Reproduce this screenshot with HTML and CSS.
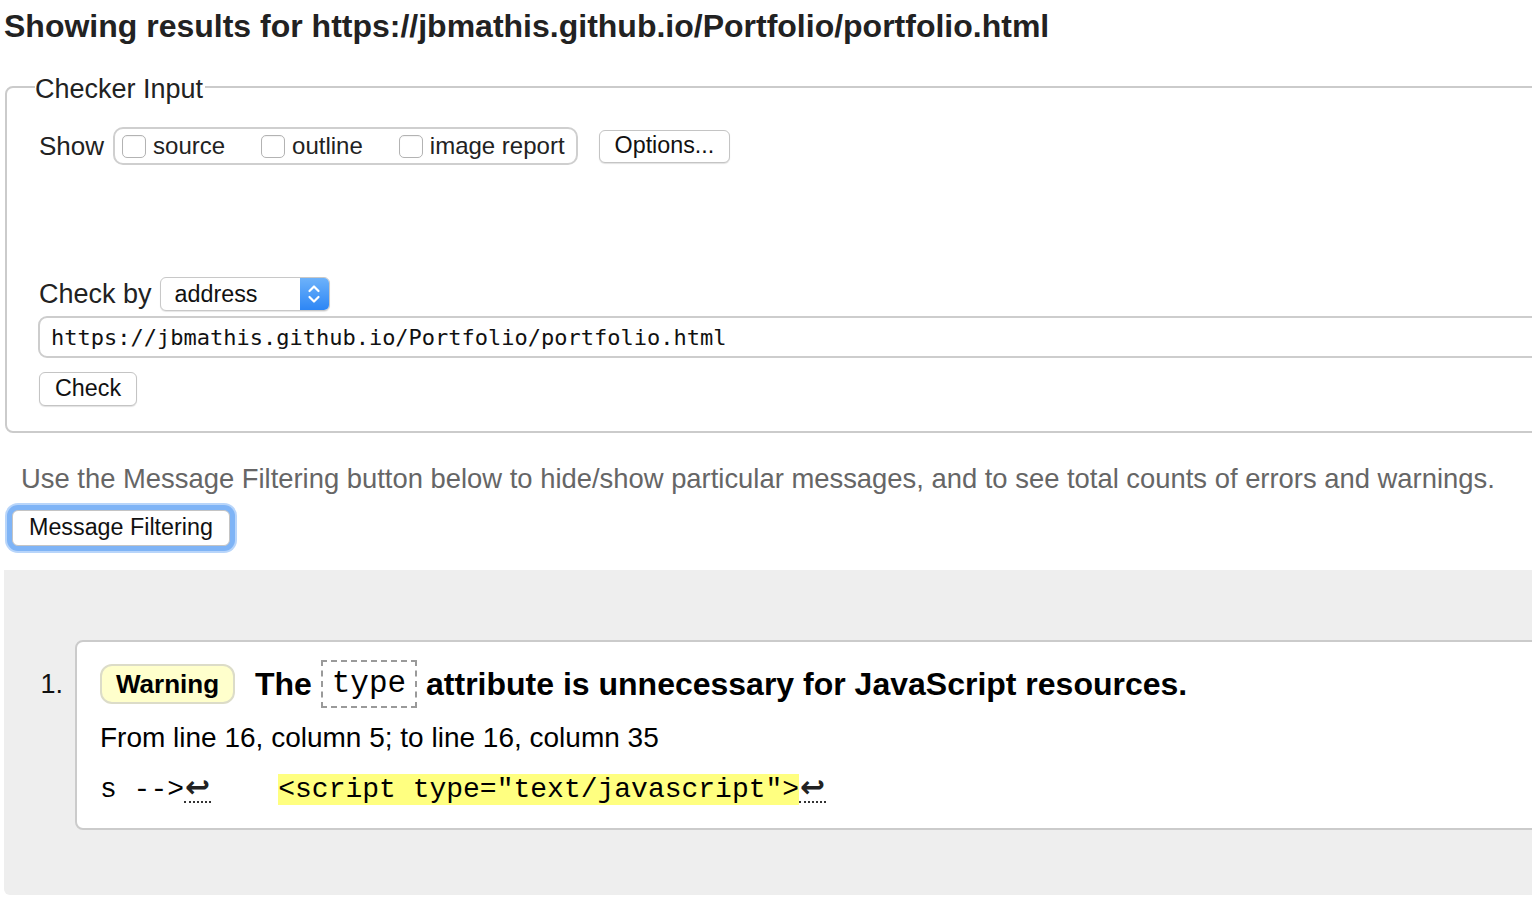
FILE: index.html
```html
<!DOCTYPE html>
<html lang="en">
<head>
<meta charset="utf-8">
<title>Showing results for https://jbmathis.github.io/Portfolio/portfolio.html</title>
<link rel="stylesheet" href="styles.css">
</head>
<body>
<div class="page">
  <h1 class="title">Showing results for https://jbmathis.github.io/Portfolio/portfolio.html</h1>

  <fieldset class="checker">
    <legend class="checker-legend">Checker Input</legend>

    <div class="show-row">
      <span class="label label-show">Show</span>
      <div class="show-group">
        <label class="opt"><input type="checkbox" class="cb"><span>source</span></label>
        <label class="opt"><input type="checkbox" class="cb"><span>outline</span></label>
        <label class="opt"><input type="checkbox" class="cb"><span>image report</span></label>
      </div>
      <button class="btn btn-options" type="button">Options...</button>
    </div>

    <div class="checkby-row">
      <span class="label">Check by</span>
      <div class="select">
        <span class="select-text">address</span>
        <span class="select-arrow">
          <svg width="16" height="26" viewBox="0 0 16 26"><path d="M3.5 10 L8 5.5 L12.5 10" fill="none" stroke="#fff" stroke-width="2.2" stroke-linecap="round" stroke-linejoin="round"/><path d="M3.5 16 L8 20.5 L12.5 16" fill="none" stroke="#fff" stroke-width="2.2" stroke-linecap="round" stroke-linejoin="round"/></svg>
        </span>
      </div>
    </div>

    <input class="url" type="text" value="https://jbmathis.github.io/Portfolio/portfolio.html">

    <div class="check-row">
      <button class="btn btn-check" type="button">Check</button>
    </div>
  </fieldset>

  <p class="hint">Use the Message Filtering button below to hide/show particular messages, and to see total counts of errors and warnings.</p>

  <div class="filter-row">
    <button class="btn btn-filter" type="button">Message Filtering</button>
  </div>

  <div class="results">
    <ol class="msgs">
      <li class="msg-item">
        <span class="msg-num">1.</span>
        <div class="msg-card">
          <p class="msg-head"><span class="badge">Warning</span> The <code class="attr">type</code> attribute is unnecessary for JavaScript resources.</p>
          <p class="msg-loc">From line 16, column 5; to line 16, column 35</p>
          <p class="msg-code">s --&gt;<span class="lf">↩</span>    <mark class="hl">&lt;script type="text/javascript"&gt;</mark><span class="lf">↩</span></p>
        </div>
      </li>
    </ol>
  </div>
</div>
</body>
</html>
```

FILE: styles.css
```css
html, body {
  overflow: hidden;
}

body {
  margin: 0;
  padding: 0 0 0 4px;
  background: #fff;
  font-family: "Liberation Sans", Arial, sans-serif;
  color: #222;
}

.page {
  width: 1570px;
}

.title {
  margin: 7px 0 0;
  font-size: 32px;
  line-height: 38px;
  font-weight: bold;
  color: #222;
}

.checker {
  margin: 26px 0 0 1px;
  padding: 0 0 25px 32px;
  border: 2px solid #cbcbcb;
  border-radius: 8px;
  min-width: 0;
}

.checker-legend {
  margin-left: -4px;
  padding: 4px 2px 0 0;
  font-size: 27px;
  line-height: 28px;
  color: #222;
}

.label {
  font-size: 27px;
  color: #222;
}

.label-show {
  font-size: 26px;
}

.show-row {
  display: flex;
  align-items: center;
  height: 38px;
  margin-top: 24px;
}

.show-group {
  display: flex;
  align-items: center;
  height: 38px;
  box-sizing: border-box;
  margin-left: 9px;
  padding: 0 11px 0 7px;
  border: 2px solid #cfcfcf;
  border-radius: 10px;
  gap: 36px;
}

.opt {
  display: flex;
  align-items: center;
  gap: 7px;
  font-size: 24px;
  color: #222;
}

.cb {
  appearance: none;
  -webkit-appearance: none;
  margin: 0;
  width: 24px;
  height: 23px;
  box-sizing: border-box;
  border: 1.5px solid #b3b3b3;
  border-radius: 5px;
  background: #fff;
  box-shadow: inset 0 1px 1px rgba(0,0,0,0.05);
}

.btn {
  font-family: "Liberation Sans", Arial, sans-serif;
  font-size: 23.3px;
  color: #111;
  background: #fff;
  border: 1px solid #c4c4c4;
  border-radius: 6px;
  box-shadow: 0 1px 1px rgba(0,0,0,0.12);
  padding: 0 16px;
  margin: 0;
  line-height: 1;
}

.btn-options {
  height: 33px;
  margin-left: 21px;
  padding: 0 15px;
}

.checkby-row {
  display: flex;
  align-items: center;
  height: 34px;
  margin-top: 112px;
}

.select {
  display: flex;
  align-items: stretch;
  width: 170px;
  height: 34px;
  box-sizing: border-box;
  margin-left: 8px;
  border: 1px solid #c8c8c8;
  border-radius: 6px;
  background: #fff;
  box-shadow: 0 1px 1px rgba(0,0,0,0.1);
  overflow: hidden;
}

.select-text {
  flex: 1;
  display: flex;
  align-items: center;
  padding-left: 14px;
  font-size: 23.3px;
  color: #111;
}

.select-arrow {
  width: 29px;
  display: flex;
  align-items: center;
  justify-content: center;
  background: linear-gradient(#6db2fa, #2d86f5);
}

.url {
  display: block;
  box-sizing: border-box;
  width: 100%;
  height: 42px;
  margin: 5px 0 0 -1px;
  padding: 0 11px;
  border: 2px solid #cdcdcd;
  border-radius: 9px;
  font-family: "DejaVu Sans Mono", monospace;
  font-size: 22px;
  color: #111;
  background: #fff;
  outline: none;
}

.check-row {
  margin-top: 14px;
  display: flex;
}

.btn-check {
  height: 34px;
  padding: 0 15px;
}

.hint {
  margin: 30px 0 0 17px;
  font-size: 27.4px;
  line-height: 32px;
  color: #666;
}

.filter-row {
  display: flex;
  margin: 15px 0 0 8px;
}

.btn-filter {
  height: 36px;
  box-shadow: 0 0 0 5px #7fb4f6, 0 0 0 7px #b8d5fa;
}

.results {
  margin-top: 24px;
  background: #eee;
  border-radius: 0 0 0 6px;
  padding: 70px 0 65px;
}

.msgs {
  list-style: none;
  margin: 0;
  padding: 0;
}

.msg-item {
  display: flex;
  align-items: flex-start;
}

.msg-num {
  width: 71px;
  box-sizing: border-box;
  padding: 20px 12px 0 0;
  text-align: right;
  font-size: 27px;
  line-height: 48px;
  color: #111;
}

.msg-card {
  flex: 1;
  background: #fff;
  border: 2px solid #cbcbcb;
  border-radius: 8px;
  padding: 18px 0 22px 23px;
}

.msg-card p {
  margin: 0;
}

.msg-head {
  font-size: 32px;
  line-height: 48px;
  font-weight: bold;
  color: #000;
}

.badge {
  display: inline-block;
  vertical-align: middle;
  height: 40px;
  box-sizing: border-box;
  margin-right: 11px;
  padding: 0 14px;
  border: 2px solid #dcdcc8;
  border-radius: 12px;
  background: #ffffcc;
  font-size: 26px;
  line-height: 37px;
  color: #000;
  position: relative;
  top: -3px;
}

.attr {
  display: inline-block;
  vertical-align: middle;
  height: 48px;
  box-sizing: border-box;
  padding: 0 9px;
  border: 2px dashed #9a9a9a;
  font-family: "Liberation Mono", monospace;
  font-size: 31px;
  font-weight: normal;
  line-height: 44px;
  position: relative;
  top: -3px;
}

.msg-loc {
  margin-top: 10px !important;
  font-size: 28px;
  line-height: 34px;
  color: #000;
}

.msg-code {
  margin-top: 18px !important;
  font-family: "Liberation Mono", monospace;
  font-size: 28px;
  line-height: 32px;
  white-space: pre;
  color: #000;
}

.hl {
  background: #ffff80;
  color: #000;
}

.lf {
  font-family: "DejaVu Sans", sans-serif;
  font-size: 30px;
  font-weight: bold;
  display: inline-block;
  width: 27px;
  text-align: center;
  line-height: 28px;
  border-bottom: 2px dotted #333;
  color: #222;
}
```
